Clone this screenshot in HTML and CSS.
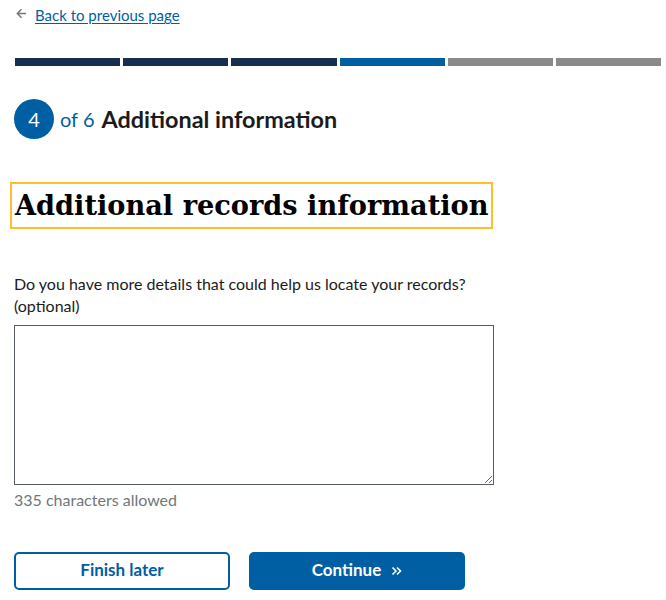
FILE: index.html
```html
<!DOCTYPE html>
<html lang="en">
<head>
<meta charset="utf-8">
<title>Additional records information</title>
<link rel="stylesheet" href="styles.css">
</head>
<body>
<main class="page">
  <div class="back">
    <svg class="back-icon" width="11" height="11" viewBox="0 0 10 10" aria-hidden="true"><path d="M9.2 5H1.5M5 1.2L1.2 5 5 8.8" fill="none" stroke="#71767a" stroke-width="1.3"/></svg>
    <a href="#" class="back-link">Back to previous page</a>
  </div>

  <div class="progress">
    <span class="seg done"></span>
    <span class="seg done"></span>
    <span class="seg done"></span>
    <span class="seg current"></span>
    <span class="seg"></span>
    <span class="seg"></span>
  </div>

  <div class="step">
    <span class="step-num">4</span>
    <span class="step-of">of 6</span>
    <span class="step-title">Additional information</span>
  </div>

  <h1 class="title">Additional records information</h1>

  <label class="label" for="details">Do you have more details that could help us locate your records? (optional)</label>
  <textarea id="details" class="field"></textarea>
  <div class="hint">335 characters allowed</div>

  <div class="actions">
    <button class="btn btn-outline">Finish later</button>
    <button class="btn btn-primary">Continue <svg class="chev" width="11" height="10" viewBox="0 0 11 10" aria-hidden="true"><path d="M1.5 1.5L5 5 1.5 8.5M6 1.5L9.5 5 6 8.5" fill="none" stroke="#fff" stroke-width="1.6"/></svg></button>
  </div>
</main>
</body>
</html>
```

FILE: styles.css
```css
html, body {
  margin: 0;
  padding: 0;
  background: #fff;
}
body {
  font-family: Lato, "Source Sans Pro", "Noto Sans", sans-serif;
  color: #1b1b1b;
}
.page {
  padding: 0 5px 0 14px;
}
.back {
  display: flex;
  align-items: center;
  gap: 8px;
  height: 30px;
  padding-left: 2px;
}
.back-icon {
  margin-top: -3px;
}
.back-link {
  color: #005ea2;
  font-size: 15px;
  text-decoration: underline;
  text-underline-offset: 2px;
}
.progress {
  display: flex;
  gap: 3px;
  margin: 28px 0 0 1px;
}
.seg {
  flex: 1;
  height: 8px;
  background: #8a8a8a;
}
.seg.done { background: #162e51; }
.seg.current { background: #005ea2; }
.step {
  display: flex;
  align-items: center;
  margin-top: 33px;
  height: 40px;
}
.step-num {
  width: 40px;
  height: 40px;
  border-radius: 50%;
  background: #005ea2;
  color: #fff;
  font-size: 20px;
  display: flex;
  align-items: center;
  justify-content: center;
}
.step-of {
  color: #005ea2;
  font-size: 20px;
  margin-left: 6px;
}
.step-title {
  font-size: 23.4px;
  font-weight: 700;
  margin-left: 7px;
}
.title {
  display: inline-block;
  margin: 43px 0 0 -4px;
  padding: 2px 3px;
  border: 2px solid #ffbe2e;
  font-family: "DejaVu Serif", serif;
  font-weight: 700;
  font-size: 27.2px;
  line-height: 39px;
  color: #000;
  white-space: nowrap;
}
.label {
  display: block;
  margin-top: 44px;
  font-size: 16px;
  line-height: 22px;
  max-width: 480px;
}
.field {
  display: block;
  box-sizing: border-box;
  width: 480px;
  height: 160px;
  margin-top: 8px;
  border: 1px solid #565c65;
  border-radius: 0;
  padding: 8px;
  font: inherit;
  resize: vertical;
}
.hint {
  color: #71767a;
  font-size: 16px;
  line-height: 22px;
  margin-top: 4px;
}
.actions {
  display: flex;
  gap: 19px;
  margin-top: 41px;
}
.btn {
  box-sizing: border-box;
  width: 216px;
  height: 38px;
  border-radius: 5px;
  font-family: inherit;
  font-size: 17px;
  font-weight: 700;
  cursor: pointer;
  display: flex;
  align-items: center;
  justify-content: center;
  padding: 0 0 3px;
}
.btn-outline {
  background: #fff;
  color: #005ea2;
  border: 2px solid #005ea2;
}
.btn-primary {
  background: #005ea2;
  color: #fff;
  border: 0;
}
.chev {
  margin-left: 10px;
  margin-top: 2px;
}
```
